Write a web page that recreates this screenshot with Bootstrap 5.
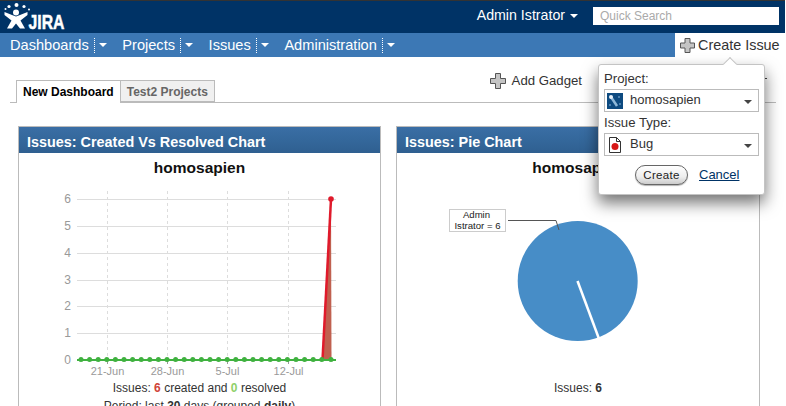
<!DOCTYPE html>
<html lang="en"><head><meta charset="utf-8"><title>JIRA</title>
<link rel="stylesheet" href="https://cdn.jsdelivr.net/npm/bootstrap@5.3.0/dist/css/bootstrap.min.css">
<style>
html,body{height:406px;overflow:hidden;background:#fff}
body{font-family:"Liberation Sans",Arial,sans-serif;font-size:12px;color:#333;position:relative;margin:0}
.topbar{height:33px;background:#036;border-top:1px solid #333;margin-right:1px}
.logo{width:66px;height:32px;display:block}
.user{color:#fff;font-size:14.2px;margin-right:15px;margin-top:4px}
.caret{display:inline-block;width:0;height:0;border-left:4px solid transparent;border-right:4px solid transparent;border-top:4px solid currentColor;vertical-align:middle}
.user .caret{margin-left:5px}
.quick{width:186px;height:18px;background:#fff;border:0;color:#aaa;font-size:12px;padding:0 7px;line-height:18px;margin-right:6px;margin-top:6px}
.navstrip{height:24px;background:#3c78b5}
.menulist{padding-left:10px}
.mi{color:#fff;font-size:14.6px;line-height:22px;text-decoration:none;display:flex;align-items:center}
.mi .sep{width:0;height:15px;border-left:1px dotted #fff;margin:0 3px 0 5px}
.mi .caret{color:#fff;margin-right:15.6px;margin-left:1px}
.createitem{width:111px;background:#fff;color:#333;font-size:14.4px;line-height:22px;gap:3px;padding-left:5px}
.addrow{height:23px;color:#333;font-size:13.2px;padding-right:204px;padding-top:12px;gap:6px;box-sizing:content-box}
.tabstrip{margin:-12px 10px 0 10px;padding-left:6px;border-bottom:1px solid #bbb;height:23px}
.tabx{font-weight:700;font-size:12px;line-height:22px;padding:0 6px;border:1px solid #bbb;color:#666;background:#f0f0f0;height:22px;margin-left:-1px}
.tabx.on{background:#fff;color:#000;height:23px;border-bottom:0;margin-left:0;position:relative;z-index:1;padding:0 6px}
.gadgets{padding:23px 26px 0 18px;gap:15px}
.gad{flex:0 0 363px;height:280px;overflow:hidden;border:1px solid #bbb;border-bottom:0;background:#fff;border-radius:0}
.gad + .gad{flex:0 0 364px}
.gadhead{height:26px;flex:none;background:linear-gradient(#3a6ea5,#336699 60%,#2f5f90);color:#fff;font-weight:700;font-size:14.4px;line-height:30px;padding:0 8px}
.gadtitle{font-weight:700;font-size:15.500px;color:#111;text-align:center;line-height:18px;margin-top:6px}
.chartwrap{display:block;margin-top:1px;flex:none}
.legend{font-size:12px;color:#333;text-align:center;line-height:18px}
.red6{color:#d04437;font-weight:700}.grn0{color:#8fd06a;font-weight:700}
.popup{position:absolute;left:598px;top:64px;width:167px;height:131px;background:#fff;border:1px solid #c4c4c4;border-radius:3px;box-shadow:0 8px 16px rgba(0,0,0,.55);padding:6px 5px;z-index:5}
.popup::before{content:"";position:absolute;left:126px;top:-6px;width:10px;height:10px;background:#fff;border-left:1px solid #c4c4c4;border-top:1px solid #c4c4c4;transform:rotate(45deg)}
.plabel{font-size:13.2px;line-height:15px;color:#333;position:relative}
.fakesel{height:23px;border:1px solid #bbb;margin:3px 0 3px;padding:0 2px;gap:7px;font-size:13px;color:#333}
.fakesel .seltxt{margin-top:-2px}
.fakesel .caret{color:#444;margin:2px 4px 0 auto}
.popbtn{height:20px;width:53px;padding:0;border-radius:10px;border:1px solid #666;font-size:11.5px;line-height:17px;font-weight:400;color:#222;background:linear-gradient(#fff,#eee 60%,#ccc);box-shadow:0 1px 1px rgba(0,0,0,.3);letter-spacing:.3px}
.popact{gap:11px;padding-left:31px;margin-top:9px}
.cancel{color:#036;font-size:13px;text-decoration:underline}
.speck{position:absolute;left:765px;top:78px;width:2px;height:1px;background:#333;z-index:6}
</style></head>
<body>
<header class="topbar d-flex align-items-start">
  <svg class="logo" viewBox="0 0 66 32" aria-label="JIRA logo">
    <g fill="#fff"><circle cx="16.500" cy="4" r="2"/><circle cx="9" cy="5.500" r="1.600"/><circle cx="24" cy="5.500" r="1.600"/><circle cx="5.500" cy="8" r="1"/><circle cx="29" cy="8.500" r="1"/>
    <path d="M4.500 11 12 14 16 15.500 20 14 27.500 11 27.500 14 20.500 19.500 25 27.500 20 27.500 16 22.500 12 27.500 7 27.500 11.500 19.500 4.500 14Z"/>
    <circle cx="16" cy="11.500" r="3"/>
    <text x="28.500" y="27.500" font-family="Liberation Sans" font-weight="700" font-size="20.500" stroke="#fff" stroke-width=".5" textLength="36" lengthAdjust="spacingAndGlyphs">JIRA</text></g>
  </svg>
  <div class="ms-auto d-flex align-items-start">
    <div class="user">Admin Istrator<span class="caret"></span></div>
    <div class="quick">Quick Search</div>
  </div>
</header>
<nav class="navstrip d-flex justify-content-between">
  <div class="d-flex menulist">
    <a class="mi" href="#">Dashboards<span class="sep"></span><span class="caret"></span></a>
    <a class="mi" href="#">Projects<span class="sep"></span><span class="caret"></span></a>
    <a class="mi" href="#">Issues<span class="sep"></span><span class="caret"></span></a>
    <a class="mi" href="#">Administration<span class="sep"></span><span class="caret"></span></a>
  </div>
  <a class="mi createitem" href="#">
    <svg width="15" height="15" viewBox="0 0 15 15"><path d="M5 .5H10V5H14.500V10H10V14.500H5V10H.5V5H5Z" fill="#c4c4c4" stroke="#555"/></svg>Create Issue</a>
</nav>
<main>
  <div class="addrow d-flex justify-content-end align-items-center">
    <svg width="16" height="16" viewBox="0 0 16 16"><path d="M5.500 .5H10.500V5.500H15.500V10.500H10.500V15.500H5.500V10.500H.5V5.500H5.500Z" fill="#c4c4c4" stroke="#555"/></svg>Add Gadget
  </div>
  <div class="tabstrip d-flex">
    <div class="tabx on">New Dashboard</div>
    <div class="tabx">Test2 Projects</div>
  </div>
  <div class="gadgets d-flex">
    <section class="card gad">
      <div class="gadhead">Issues: Created Vs Resolved Chart</div>
      <div class="gadtitle">homosapien</div>
      <svg class="chartwrap" width="361" height="201" viewBox="19 178 361 201">
        <g stroke="#ddd"><path d="M77 199.500H336M77 226.500H336M77 253.500H336M77 280.500H336M77 306.500H336M77 333.500H336"/>
        <path stroke-dasharray="3 3" d="M107.500 191V360M167.500 191V360M227.500 191V360M288.500 191V360"/></g>
        <path d="M336 360.500H77M107.500 360V364M167.500 360V364M227.500 360V364M288.500 360V364" stroke="#999"/>
        <g font-family="Liberation Sans" font-size="12" fill="#999" text-anchor="end">
        <text x="71" y="203">6</text><text x="71" y="230">5</text><text x="71" y="257">4</text><text x="71" y="284">3</text><text x="71" y="310">2</text><text x="71" y="337">1</text><text x="71" y="364">0</text></g>
        <g font-family="Liberation Sans" font-size="11" fill="#999" text-anchor="middle">
        <text x="107.500" y="375">21-Jun</text><text x="167.500" y="375">28-Jun</text><text x="227.500" y="375">5-Jul</text><text x="288.500" y="375">12-Jul</text></g>
        <path d="M323 360 331 199 331.500 360Z" fill="#c0604f"/>
        <path d="M322.500 360 331 199" stroke="#e01a2b" stroke-width="2.500" fill="none"/>
        <circle cx="331" cy="199" r="2.800" fill="#e01a2b"/>
        <path d="M77 360H336" stroke="#3fb13f" stroke-width="2"/>
        <g fill="#3fb13f"><circle cx="81" cy="359.500" r="2.500"/><circle cx="89.600" cy="359.500" r="2.500"/><circle cx="98.200" cy="359.500" r="2.500"/><circle cx="106.800" cy="359.500" r="2.500"/><circle cx="115.400" cy="359.500" r="2.500"/><circle cx="124" cy="359.500" r="2.500"/><circle cx="132.600" cy="359.500" r="2.500"/><circle cx="141.200" cy="359.500" r="2.500"/><circle cx="149.800" cy="359.500" r="2.500"/><circle cx="158.400" cy="359.500" r="2.500"/><circle cx="167" cy="359.500" r="2.500"/><circle cx="175.600" cy="359.500" r="2.500"/><circle cx="184.200" cy="359.500" r="2.500"/><circle cx="192.800" cy="359.500" r="2.500"/><circle cx="201.400" cy="359.500" r="2.500"/><circle cx="210" cy="359.500" r="2.500"/><circle cx="218.600" cy="359.500" r="2.500"/><circle cx="227.200" cy="359.500" r="2.500"/><circle cx="235.800" cy="359.500" r="2.500"/><circle cx="244.400" cy="359.500" r="2.500"/><circle cx="253" cy="359.500" r="2.500"/><circle cx="261.600" cy="359.500" r="2.500"/><circle cx="270.200" cy="359.500" r="2.500"/><circle cx="278.800" cy="359.500" r="2.500"/><circle cx="287.400" cy="359.500" r="2.500"/><circle cx="296" cy="359.500" r="2.500"/><circle cx="304.600" cy="359.500" r="2.500"/><circle cx="313.200" cy="359.500" r="2.500"/><circle cx="321.800" cy="359.500" r="2.500"/><circle cx="331" cy="359.500" r="2.500"/></g>
      </svg>
      <div class="legend">Issues: <span class="red6">6</span> created and <span class="grn0">0</span> resolved</div>
      <div class="legend">Period: last <b>30</b> days (grouped <b>daily</b>)</div>
    </section>
    <section class="card gad">
      <div class="gadhead">Issues: Pie Chart</div>
      <div class="gadtitle">homosapien</div>
      <svg class="chartwrap" width="362" height="201" viewBox="397 178 362 201">
        <circle cx="577.700" cy="281" r="60" fill="#478dc7"/>
        <path d="M577.500 281 598.700 338" stroke="#fff" stroke-width="2.500"/>
        <path d="M508 220.500H556L559 230" fill="none" stroke="#555"/>
        <rect x="449.500" y="209.500" width="56" height="22" fill="#fff" stroke="#ccc"/>
        <g font-family="Liberation Sans" font-size="9.600" fill="#222" text-anchor="middle"><text x="476.500" y="218">Admin</text><text x="477.500" y="228.500">Istrator = 6</text></g>
      </svg>
      <div class="legend">Issues: <b>6</b></div>
    </section>
  </div>
</main>
<aside class="popup">
  <div class="plabel">Project:</div>
  <div class="fakesel d-flex align-items-center">
    <svg width="16" height="16" viewBox="0 0 16 16"><rect width="16" height="16" fill="#0d4a80"/><g fill="#5f93c0"><circle cx="12" cy="4" r="1"/><circle cx="13" cy="11" r="1"/><circle cx="3" cy="12" r="1"/></g><path d="M4 4 10 13" stroke="#8fb8d8" stroke-width="2.500"/><circle cx="4" cy="4" r="2" fill="#e8f0f8"/></svg>
    <span class="seltxt">homosapien</span><span class="caret"></span>
  </div>
  <div class="plabel">Issue Type:</div>
  <div class="fakesel d-flex align-items-center">
    <svg width="16" height="16" viewBox="0 0 16 16"><path d="M2.500 .5H9.500L13.500 4.500V15.500H2.500Z" fill="#fff" stroke="#333"/><path d="M9.500 .5V4.500H13.500" fill="none" stroke="#333"/><circle cx="8" cy="9.500" r="3.500" fill="#d81818"/></svg>
    <span class="seltxt">Bug</span><span class="caret"></span>
  </div>
  <div class="popact d-flex align-items-center">
    <button class="btn popbtn" type="button">Create</button><a class="cancel" href="#">Cancel</a>
  </div>
</aside>
<span class="speck"></span>
</body></html>
